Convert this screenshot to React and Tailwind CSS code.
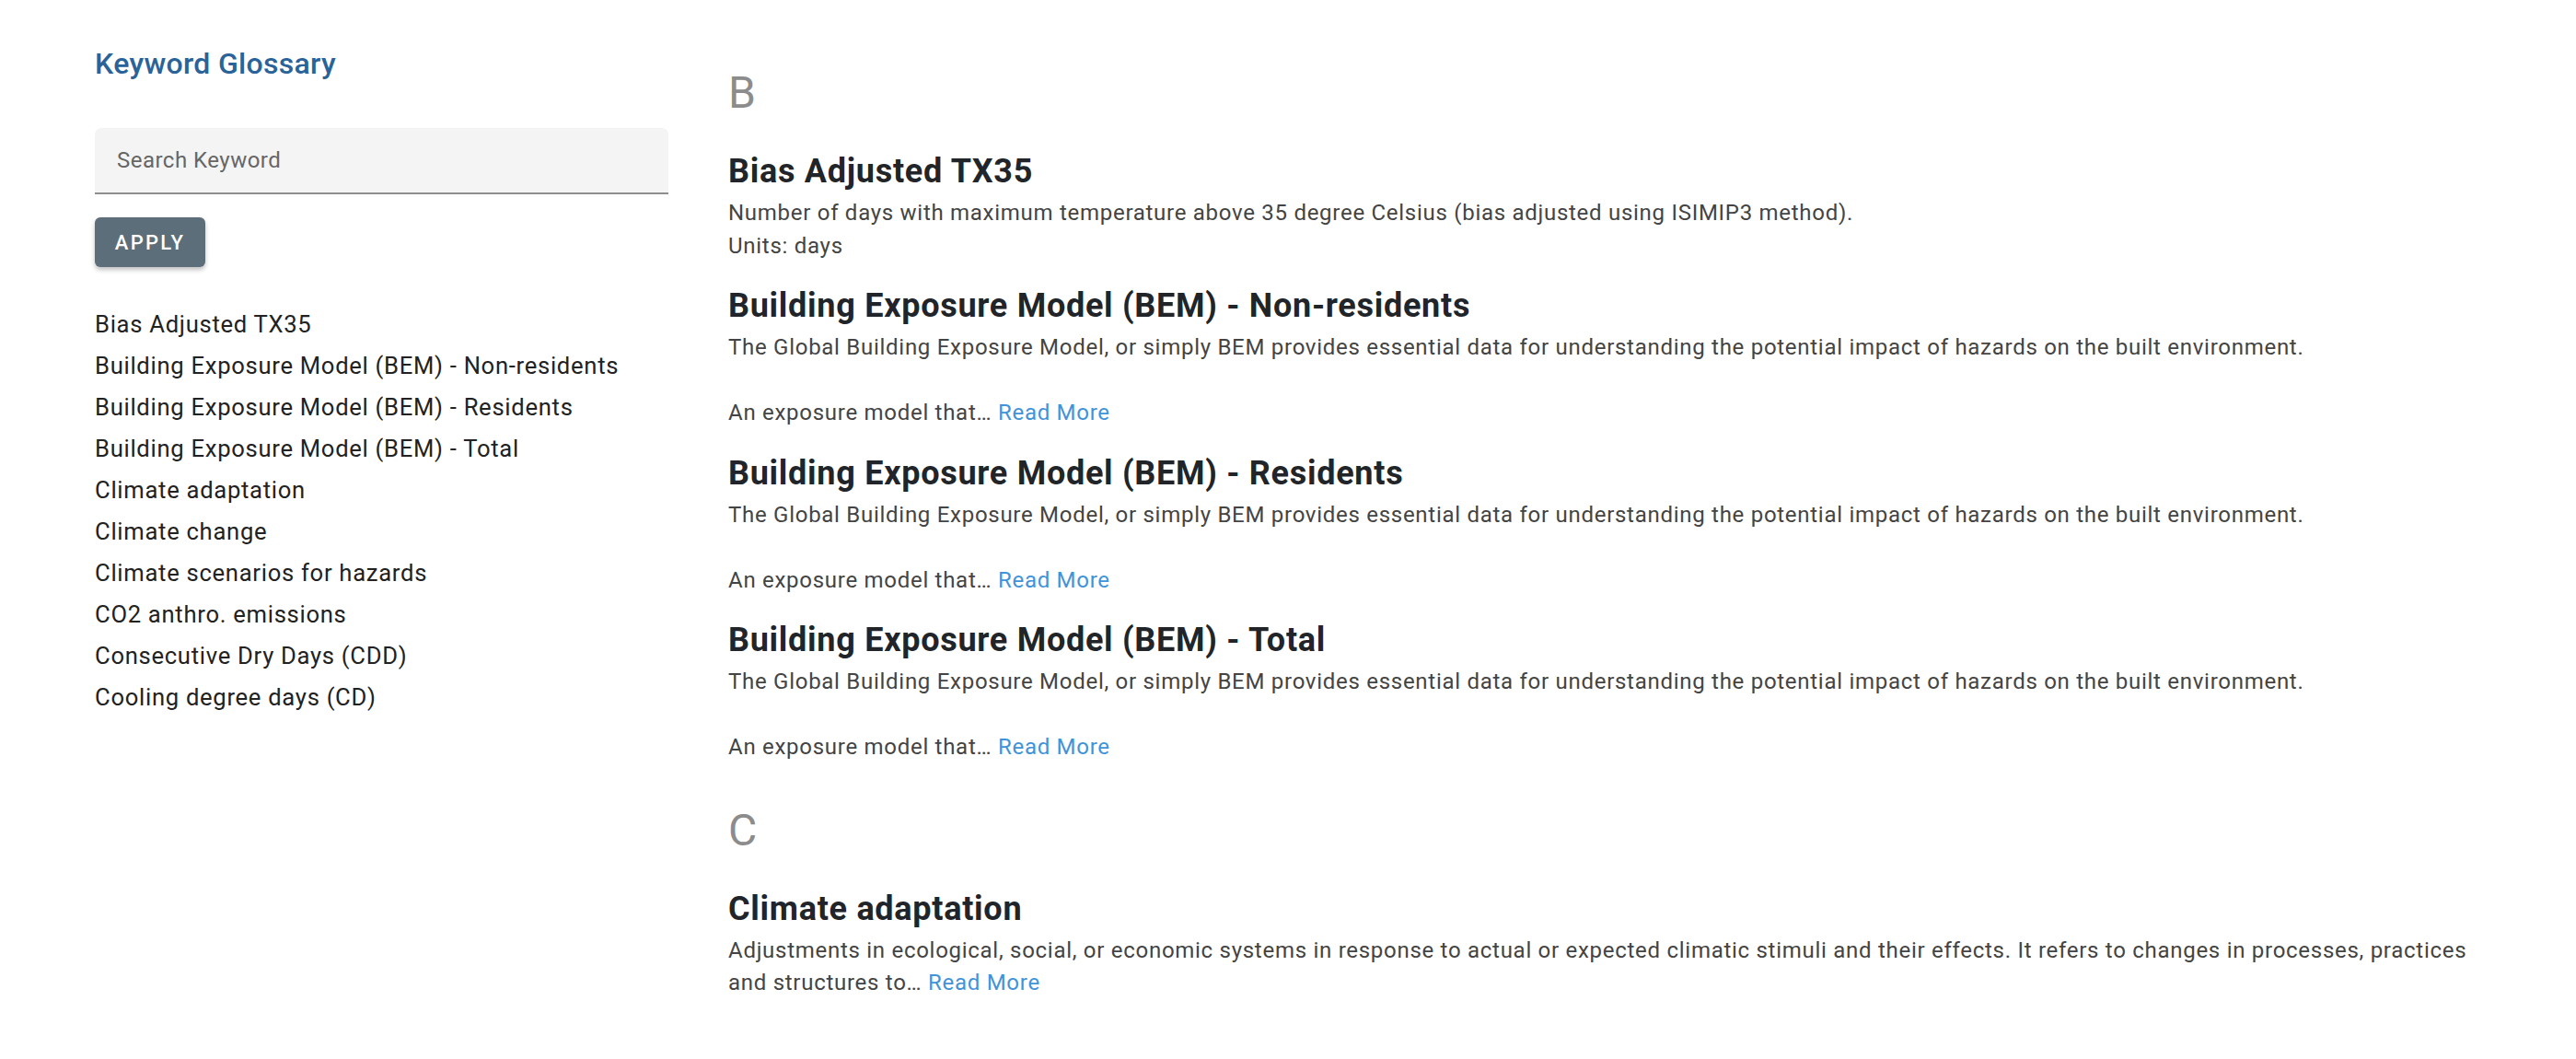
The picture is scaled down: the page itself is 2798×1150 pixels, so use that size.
import React from 'react';

const keywords = [
  'Bias Adjusted TX35',
  'Building Exposure Model (BEM) - Non-residents',
  'Building Exposure Model (BEM) - Residents',
  'Building Exposure Model (BEM) - Total',
  'Climate adaptation',
  'Climate change',
  'Climate scenarios for hazards',
  'CO2 anthro. emissions',
  'Consecutive Dry Days (CDD)',
  'Cooling degree days (CD)',
];

const bemText =
  'The Global Building Exposure Model, or simply BEM provides essential data for understanding the potential impact of hazards on the built environment.\n\nAn exposure model that… ';

const sections = [
  {
    letter: 'B',
    entries: [
      {
        title: 'Bias Adjusted TX35',
        text: 'Number of days with maximum temperature above 35 degree Celsius (bias adjusted using ISIMIP3 method).\nUnits: days',
      },
      { title: 'Building Exposure Model (BEM) - Non-residents', text: bemText, more: true },
      { title: 'Building Exposure Model (BEM) - Residents', text: bemText, more: true },
      { title: 'Building Exposure Model (BEM) - Total', text: bemText, more: true },
    ],
  },
  {
    letter: 'C',
    entries: [
      {
        title: 'Climate adaptation',
        text: 'Adjustments in ecological, social, or economic systems in response to actual or expected climatic stimuli and their effects. It refers to changes in processes, practices and structures to… ',
        more: true,
      },
    ],
  },
];

export default function App() {
  return (
    <div className="min-h-screen bg-white font-['Roboto',sans-serif] flex px-[103px] gap-[65px]">
      {/* Sidebar */}
      <aside className="w-[623px] shrink-0 pt-[50px]">
        <h2 className="text-[32px] leading-[38px] font-medium tracking-[0.01em] text-[#2a6399]">Keyword Glossary</h2>

        <div className="mt-[51px] h-[72px] bg-[#f4f4f4] rounded-t-[7px] border-b-[2px] border-[#8e8e8e] flex items-center px-6">
          <input
            placeholder="Search Keyword"
            className="w-full bg-transparent outline-none text-[24px] leading-[28px] tracking-[0.02em] text-[#333] placeholder:text-[#666]"
          />
        </div>

        <button className="mt-[25px] w-[120px] h-[54px] rounded-[6px] bg-[#5b6e7a] text-white text-[22px] font-medium tracking-[0.1em] shadow-[0_3px_5px_rgba(0,0,0,0.25)]">
          APPLY
        </button>

        <ul className="mt-[40px]">
          {keywords.map((k) => (
            <li key={k} className="text-[25.6px] leading-[45px] text-[#222] tracking-[0.028em]">
              {k}
            </li>
          ))}
        </ul>
      </aside>

      {/* Glossary entries */}
      <main className="flex-1 pt-[73px]">
        {sections.map((s, i) => (
          <section key={s.letter} className={i > 0 ? 'mt-[44px]' : ''}>
            <div className="text-[48px] leading-[56px] text-[#8c8c8c]">{s.letter}</div>
            <div className="mt-[37px]">
              {s.entries.map((e, j) => (
                <div key={e.title} className={j > 0 ? 'mt-[27px]' : ''}>
                  <h3 className="text-[36px] leading-[40px] font-bold tracking-[0.02em] text-[#212529]">{e.title}</h3>
                  <p className="mt-[8px] text-[24px] leading-[35.5px] text-[#444] tracking-[0.03em] whitespace-pre-line">
                    {e.text}
                    {e.more && <a className="text-[#3f94d9] cursor-pointer">Read More</a>}
                  </p>
                </div>
              ))}
            </div>
          </section>
        ))}
      </main>
    </div>
  );
}
